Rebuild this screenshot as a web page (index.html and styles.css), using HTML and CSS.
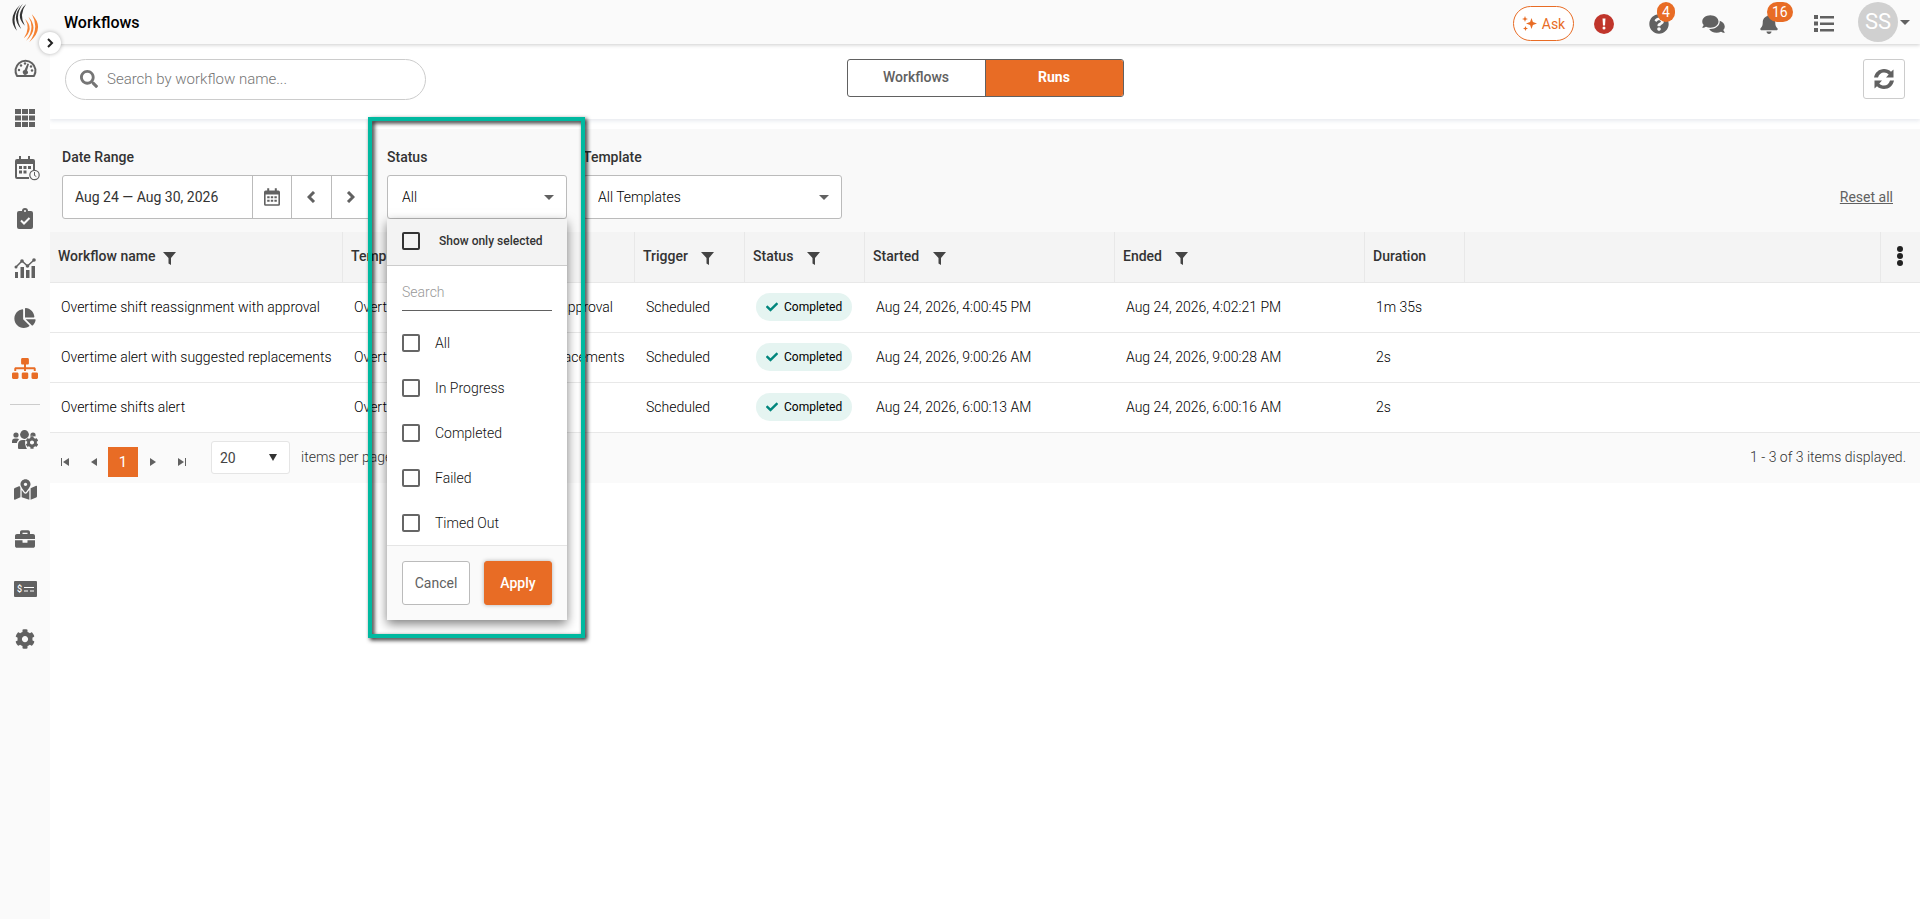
FILE: index.html
```html
<!DOCTYPE html>
<html lang="en">
<head>
  <meta charset="UTF-8">
  <title>Workflows</title>
  <link rel="stylesheet" href="styles.css">
</head>
<body>
  <!-- Shared icons -->
  <svg class="sprite" aria-hidden="true">
    <symbol id="filter" viewBox="0 0 13 13"><path d="M0 0h13L8 6v7L5.500 11.500V6z"/></symbol>
    <symbol id="caret" viewBox="0 0 10 5"><path d="M0 0h10L5 5z"/></symbol>
    <symbol id="check" viewBox="0 0 512 512"><path d="M173.900 439.400l-166.400-166.400c-10-10-10-26.200 0-36.200l36.200-36.200c10-10 26.200-10 36.200 0L192 312.700 432.100 72.600c10-10 26.200-10 36.200 0l36.200 36.200c10 10 10 26.200 0 36.200l-294.400 294.400c-10 10-26.200 10-36.200 0z"/></symbol>
    <symbol id="gear" viewBox="0 0 512 512"><path d="M487.400 315.700l-42.600-24.600c4.300-23.200 4.300-47 0-70.200l42.600-24.600c4.900-2.800 7.100-8.600 5.500-14-11.100-35.600-30-67.800-54.700-94.600-3.800-4.100-10-5.100-14.800-2.300L380.800 110c-17.900-15.400-38.500-27.300-60.800-35.100V25.800c0-5.600-3.900-10.500-9.400-11.700-36.700-8.200-74.300-7.800-109.200 0-5.500 1.200-9.400 6.100-9.400 11.700V75c-22.200 7.900-42.800 19.800-60.800 35.100L88.700 85.500c-4.900-2.800-11-1.900-14.800 2.300-24.700 26.700-43.600 58.900-54.700 94.600-1.700 5.400.6 11.200 5.500 14L67.300 221c-4.300 23.200-4.300 47 0 70.200l-42.600 24.600c-4.900 2.800-7.100 8.600-5.500 14 11.100 35.600 30 67.800 54.700 94.600 3.800 4.100 10 5.100 14.800 2.300l42.600-24.600c17.900 15.400 38.500 27.300 60.800 35.100v49.200c0 5.600 3.900 10.500 9.400 11.700 36.700 8.200 74.300 7.800 109.200 0 5.500-1.200 9.400-6.100 9.400-11.700v-49.200c22.200-7.900 42.800-19.800 60.800-35.100l42.600 24.600c4.900 2.800 11 1.900 14.800-2.300 24.700-26.700 43.600-58.900 54.700-94.600 1.500-5.500-.7-11.300-5.600-14.100zM256 336c-44.100 0-80-35.900-80-80s35.900-80 80-80 80 35.900 80 80-35.900 80-80 80z"/></symbol>
    <symbol id="calendar" viewBox="0 0 20 22"><path fill-rule="evenodd" d="M4 0h2.500v3h7V0H16v3h2a2 2 0 0 1 2 2v15a2 2 0 0 1-2 2H2a2 2 0 0 1-2-2V5a2 2 0 0 1 2-2h2zM2 8v12h16V8zM4 10h3v2.500H4zM8.500 10h3v2.500h-3zM13 10h3v2.500h-3zM4 14.500h3V17H4zM8.500 14.500h3V17h-3zM13 14.500h3V17h-3z"/></symbol>
  </svg>

  <aside class="sidebar">
    <a class="logo" href="#" aria-label="Home">
      <svg width="27" height="40" viewBox="0 0 80 120">
        <g fill="#333">
          <path d="M24 5Q-17 45 14 83Q-4 42 24 5z"/>
          <path d="M32 2Q-7 42 27 78Q5 40 32 2z"/>
          <path d="M42 3Q6 36 38 68Q19 35 42 3z"/>
        </g>
        <g fill="#f58233">
          <path d="M39 48Q68 78 35 106Q56 76 39 48z"/>
          <path d="M49 41Q82 78 42 113Q70 76 49 41z"/>
          <path d="M59 34Q100 76 51 118Q83 76 59 34z"/>
        </g>
      </svg>
    </a>
    <button class="expand" aria-label="Expand menu">
      <svg width="7" height="10" viewBox="0 0 7 10"><path d="M1 1l4 4-4 4" fill="none" stroke="#222" stroke-width="2"/></svg>
    </button>
    <nav class="menu">
      <a href="#" aria-label="Dashboard">
        <svg width="23" height="18" viewBox="0 0 23 18"><path d="M3 17a10 10 0 1 1 17 0z" fill="none" stroke="#616161" stroke-width="2" stroke-linejoin="round"/><circle cx="5" cy="11" r="1.200"/><circle cx="7" cy="6.500" r="1.200"/><circle cx="11" cy="4.500" r="1.200"/><circle cx="17" cy="7.500" r="1.200"/><circle cx="18" cy="11.500" r="1.200"/><path d="M13.500 4.500l1.500.5-2 6.500a2.500 2.500 0 1 1-2.500-.5z"/></svg>
      </a>
      <a href="#" aria-label="Schedule grid">
        <svg width="20" height="18" viewBox="0 0 20 18"><path d="M0 0h6v5H0zM7 0h6v5H7zM14 0h6v5h-6zM0 6.500h6v5H0zM7 6.500h6v5H7zM14 6.500h6v5h-6zM0 13h6v5H0zM7 13h6v5H7zM14 13h6v5h-6z"/></svg>
      </a>
      <a class="wide" href="#" aria-label="Time calendar">
        <svg width="25" height="25" viewBox="0 0 25 25"><path fill-rule="evenodd" d="M4 0h2v3h7V0h2v3h3a2 2 0 0 1 2 2v9h-2V8H2v13h12v2H2a2 2 0 0 1-2-2V5a2 2 0 0 1 2-2h2z"/><path d="M4 10h3v3H4zM8.500 10h3v3h-3zM13 10h3v3h-3zM4 14.500h3v3H4zM8.500 14.500h3v3h-3z"/><circle cx="19.500" cy="19" r="4.700" fill="#fafafa" stroke="#616161" stroke-width="1.200"/><path d="M19.500 16v3.500l1.800 1" fill="none" stroke="#616161"/></svg>
      </a>
      <a href="#" aria-label="Tasks">
        <svg width="16" height="21" viewBox="0 0 16 21"><path d="M2 3h3a3 3 0 0 1 6 0h3a2 2 0 0 1 2 2v14a2 2 0 0 1-2 2H2a2 2 0 0 1-2-2V5a2 2 0 0 1 2-2z"/><circle cx="8" cy="3" r="1" fill="#fafafa"/><path d="M4 12.500l3 3 5.500-5.500" fill="none" stroke="#fafafa" stroke-width="2"/></svg>
      </a>
      <a href="#" aria-label="Analytics">
        <svg width="22" height="20" viewBox="0 0 22 20"><path d="M1 14h3v6H1zM6.500 9h3.500v11H6.500zM12 12h3.500v8H12zM17.500 8h3.500v12h-3.500z"/><path d="M2 9l6-6 5.500 5L20 2" fill="none" stroke="#616161" stroke-width="1.500"/><circle cx="2" cy="9" r="1.500"/><circle cx="8" cy="3" r="1.800"/><circle cx="13.500" cy="8" r="1.800"/><circle cx="20" cy="2" r="1.800"/></svg>
      </a>
      <a href="#" aria-label="Reports">
        <svg width="22" height="20" viewBox="0 0 544 512"><path d="M527.800 288H290.500l158 158c6 6 16 6.500 22.200.7 38.700-36.500 65.300-85.600 73.100-140.900 1.400-9.400-6.500-17.800-16-17.800zm-15.800-64.800C503.700 103.700 408.300 8.300 288.800 0 279.700-.6 272 7.100 272 16.200V240h223.800c9.100 0 16.800-7.700 16.200-16.800zM224 288V50.700c0-9.500-8.400-17.400-17.800-16C87 51.500-4.100 155.600.1 280.400 4.500 408.500 114.800 513.600 243 512c50.400-.6 97-16.900 135.300-44 7.900-5.600 8.400-17.200 1.600-24.100L224 288z"/></svg>
      </a>
      <a class="active" href="#" aria-label="Workflows">
        <svg width="26" height="21" viewBox="0 0 640 512"><path d="M128 352H32c-17.700 0-32 14.300-32 32v96c0 17.700 14.300 32 32 32h96c17.700 0 32-14.300 32-32v-96c0-17.700-14.300-32-32-32zm-24-80h192v48h48v-48h192v48h48v-57.600c0-21.200-17.200-38.400-38.400-38.400H344v-64h40c17.700 0 32-14.300 32-32V32c0-17.700-14.300-32-32-32H256c-17.700 0-32 14.300-32 32v96c0 17.700 14.300 32 32 32h40v64H94.400C73.200 224 56 241.200 56 262.400V320h48v-48zm264 80h-96c-17.700 0-32 14.300-32 32v96c0 17.700 14.300 32 32 32h96c17.700 0 32-14.300 32-32v-96c0-17.700-14.300-32-32-32zm240 0h-96c-17.700 0-32 14.300-32 32v96c0 17.700 14.300 32 32 32h96c17.700 0 32-14.300 32-32v-96c0-17.700-14.300-32-32-32z"/></svg>
      </a>
      <hr>
      <a href="#" aria-label="Team settings">
        <svg width="26" height="19" viewBox="0 0 26 19"><circle cx="4" cy="5" r="2.600"/><circle cx="12.500" cy="4.500" r="4.400"/><circle cx="21" cy="5" r="2.600"/><path d="M0 13V11.500a3 3 0 0 1 3-3h2q1.500 0 2 1Q5 11 4.800 13zM6 18v-3q0-5 5-5h3q-2 4 1 9H7q-1 0-1-1z"/><circle cx="20" cy="12.500" r="6.700" fill="#fafafa"/><use href="#gear" x="13.500" y="6" width="13" height="13"/></svg>
      </a>
      <a href="#" aria-label="Locations">
        <svg width="23" height="21" viewBox="0 0 576 512"><path d="M288 0c-69.600 0-126 56.400-126 126 0 56.300 82.400 158.800 113.900 196 6.400 7.500 17.800 7.500 24.200 0C331.700 284.800 414 182.300 414 126 414 56.400 357.600 0 288 0zm0 168c-23.200 0-42-18.800-42-42s18.800-42 42-42 42 18.800 42 42-18.800 42-42 42zM20.100 216A32 32 0 0 0 0 245.700V496c0 11.300 11.400 19.100 21.900 14.900L160 448V214.900c-8.800-16-16.100-31.500-21.300-46.400L20.100 216zM288 359.700c-14.100 0-27.400-6.200-36.500-17-19.700-23.200-40.600-49.600-59.500-76.700v182l192 64V266c-18.900 27.100-39.800 53.500-59.500 76.700-9.100 10.800-22.400 17-36.500 17zm266.100-198.500L416 224v288l139.900-56A32 32 0 0 0 576 426.300V176c0-11.300-11.400-19-21.900-14.800z"/></svg>
      </a>
      <a href="#" aria-label="Jobs">
        <svg width="20" height="20" viewBox="0 0 512 512"><path d="M320 336c0 8.800-7.200 16-16 16h-96c-8.800 0-16-7.200-16-16v-48H0v144c0 25.600 22.400 48 48 48h416c25.600 0 48-22.400 48-48V288H320v48zm144-208h-80V80c0-25.600-22.400-48-48-48H176c-25.600 0-48 22.400-48 48v48H48c-25.600 0-48 22.400-48 48v80h512v-80c0-25.600-22.400-48-48-48zm-144 0H192V96h128v32z"/></svg>
      </a>
      <a href="#" aria-label="Payroll">
        <svg width="23" height="16" viewBox="0 0 23 16"><rect width="23" height="16" rx="1"/><text x="3" y="11" fill="#fff" font-family="Roboto, sans-serif" font-size="9" font-weight="500">$</text><path d="M10 6.500h10M10 10h4M16 10h4" stroke="#fff" stroke-width="1.200"/></svg>
      </a>
      <a href="#" aria-label="Settings">
        <svg width="20" height="20"><use href="#gear"/></svg>
      </a>
    </nav>
  </aside>

  <div class="main">
    <header class="header">
      <h1>Workflows</h1>
      <div class="header-actions">
        <button class="ask">
          <svg width="15" height="15" viewBox="0 0 15 15"><path d="M9.500 2l1.400 4.100L15 7.500l-4.100 1.400L9.500 13l-1.400-4.100L4 7.500l4.100-1.400zM3 0l.8 2.200L6 3l-2.200.8L3 6l-.8-2.200L0 3l2.200-.8zM3.500 10l.7 1.800 1.800.7-1.800.7-.7 1.800-.7-1.800-1.800-.7 1.800-.7z"/></svg>
          Ask
        </button>
        <button class="icon-btn" aria-label="Alerts">
          <svg width="20" height="20" viewBox="0 0 20 20"><circle cx="10" cy="10" r="10" fill="#c0352b"/><path d="M8.500 4.500h3L11 11.500H9z" fill="#fff"/><circle cx="10" cy="14" r="1.500" fill="#fff"/></svg>
        </button>
        <button class="icon-btn" aria-label="Help">
          <svg width="20" height="20" viewBox="0 0 512 512"><path d="M504 256c0 137-111 248-248 248S8 393 8 256C8 119.100 119 8 256 8s248 111.100 248 248zM262.700 90c-54.500 0-89.300 23-116.600 63.800-3.500 5.300-2.400 12.400 2.700 16.300l34.700 26.300c5.200 3.900 12.600 3 16.700-2.100 17.900-22.700 30.100-35.800 57.300-35.800 20.400 0 45.700 13.100 45.700 33 0 15-12.400 22.700-32.500 34C247.100 238.500 216 254.900 216 296v4c0 6.600 5.400 12 12 12h56c6.600 0 12-5.400 12-12v-1.300c0-28.500 83.200-29.600 83.200-106.700 0-58-60.200-102-116.500-102zM256 338c-25.400 0-46 20.600-46 46s20.600 46 46 46 46-20.600 46-46-20.600-46-46-46z"/></svg>
          <span class="badge">4</span>
        </button>
        <button class="icon-btn" aria-label="Messages">
          <svg width="23" height="20" viewBox="0 0 576 512"><path d="M416 192c0-88.400-93.100-160-208-160S0 103.600 0 192c0 34.300 14.100 65.900 38 92-13.400 30.200-35.500 54.200-35.800 54.500-2.200 2.300-2.800 5.700-1.500 8.700S4.800 352 8 352c36.600 0 66.900-12.300 88.700-25 32.200 15.700 70.300 25 111.300 25 114.900 0 208-71.600 208-160zm122 220c23.900-26 38-57.700 38-92 0-66.900-53.500-124.200-129.300-148.100.9 6.600 1.300 13.300 1.300 20.100 0 105.900-107.700 192-240 192-10.800 0-21.300-.8-31.700-1.900C207.800 439.600 281.800 480 368 480c41 0 79.100-9.200 111.300-25 21.800 12.700 52.100 25 88.700 25 3.200 0 6.100-1.900 7.300-4.800 1.300-2.900.7-6.300-1.500-8.700-.3-.3-22.400-24.200-35.800-54.500z"/></svg>
        </button>
        <button class="icon-btn" aria-label="Notifications">
          <svg width="18" height="20" viewBox="0 0 448 512"><path d="M224 512c35.300 0 64-28.700 64-64H160c0 35.400 28.700 64 64 64zm215.400-149.700c-19.300-20.800-55.500-52-55.500-154.300 0-77.700-54.500-139.900-127.900-155.200V32c0-17.700-14.300-32-32-32s-32 14.300-32 32v20.800C118.600 68.100 64.100 130.300 64.100 208c0 102.300-36.200 133.500-55.500 154.300-6 6.400-8.700 14.200-8.600 21.700.1 16.400 13 32 32.100 32h383.800c19.100 0 32-15.600 32.100-32 0-7.500-2.600-15.300-8.600-21.700z"/></svg>
          <span class="badge">16</span>
        </button>
        <button class="icon-btn" aria-label="List">
          <svg width="20" height="17" viewBox="0 0 20 17"><path d="M0 0h4v4H0zM6 1h14v2.500H6zM0 6.500h4v4H0zM6 7.500h14V10H6zM0 13h4v4H0zM6 14h14v2.500H6z"/></svg>
        </button>
        <button class="user" aria-label="Account">
          <span class="avatar">SS</span>
          <svg width="10" height="5"><use href="#caret"/></svg>
        </button>
      </div>
    </header>

    <div class="toolbar">
      <label class="search">
        <svg width="18" height="18" viewBox="0 0 512 512"><path d="M505 442.700L405.300 343c-4.500-4.500-10.600-7-17-7H372c27.600-35.300 44-79.700 44-128C416 93.100 322.900 0 208 0S0 93.100 0 208s93.100 208 208 208c48.300 0 92.700-16.400 128-44v16.300c0 6.400 2.500 12.500 7 17l99.700 99.700c9.400 9.400 24.600 9.400 33.900 0l28.300-28.300c9.400-9.400 9.400-24.600.1-34zM208 336c-70.700 0-128-57.200-128-128 0-70.700 57.200-128 128-128 70.700 0 128 57.200 128 128 0 70.700-57.200 128-128 128z"/></svg>
        <input type="text" placeholder="Search by workflow name..." aria-label="Search by workflow name">
      </label>
      <div class="tabs">
        <button>Workflows</button>
        <button class="selected">Runs</button>
      </div>
      <button class="refresh" aria-label="Refresh">
        <svg width="20" height="20" viewBox="0 0 20 20"><path d="M0 8.500C1 3.500 5 0 10 0c2.800 0 5.200 1 7 2.800L19.500.5V8.500H12l2.700-2.900C13.500 4.300 12 3.500 10 3.500c-3 0-5.200 2-6 5zM20 11.500c-1 5-5 8.500-10 8.500-2.800 0-5.200-1-7-2.800L.5 19.500v-8H8l-2.700 2.900c1.200 1.300 2.700 2.100 4.700 2.100 3 0 5.200-2 6-5z"/></svg>
      </button>
    </div>

    <section class="filters">
      <div class="field">
        <label for="dateRange">Date Range</label>
        <div class="date-group">
          <input type="text" id="dateRange" value="Aug 24 — Aug 30, 2026">
          <button aria-label="Pick dates"><svg width="16" height="18"><use href="#calendar"/></svg></button>
          <button aria-label="Previous"><svg width="9" height="12" viewBox="0 0 9 12"><path d="M7 1L2 6l5 5" fill="none" stroke="#616161" stroke-width="3"/></svg></button>
          <button aria-label="Next"><svg width="9" height="12" viewBox="0 0 9 12"><path d="M2 1l5 5-5 5" fill="none" stroke="#616161" stroke-width="3"/></svg></button>
        </div>
      </div>

      <div class="field status-field">
        <label for="status">Status</label>
        <div class="select">
          <select id="status"><option>All</option></select>
          <svg width="10" height="5"><use href="#caret"/></svg>
        </div>

        <form class="panel">
          <label class="only-selected"><input type="checkbox"> Show only selected</label>
          <div class="panel-search">
            <input type="text" placeholder="Search" aria-label="Search statuses" autofocus>
          </div>
          <label class="option"><input type="checkbox"> All</label>
          <label class="option"><input type="checkbox"> In Progress</label>
          <label class="option"><input type="checkbox"> Completed</label>
          <label class="option"><input type="checkbox"> Failed</label>
          <label class="option"><input type="checkbox"> Timed Out</label>
          <div class="panel-footer">
            <button type="button">Cancel</button>
            <button type="button" class="apply">Apply</button>
          </div>
        </form>
        <div class="highlight"></div>
      </div>

      <div class="field template-field">
        <label for="template">Template</label>
        <div class="select">
          <select id="template"><option>All Templates</option></select>
          <svg width="10" height="5"><use href="#caret"/></svg>
        </div>
      </div>

      <a class="reset" href="#">Reset all</a>
    </section>

    <table class="runs">
      <colgroup>
        <col class="col-name"><col class="col-name"><col class="col-trigger"><col class="col-status">
        <col class="col-date"><col class="col-date"><col class="col-duration"><col><col class="col-menu">
      </colgroup>
      <thead>
        <tr>
          <th class="tight">Workflow name <svg width="13" height="13"><use href="#filter"/></svg></th>
          <th>Template <svg width="13" height="13"><use href="#filter"/></svg></th>
          <th>Trigger <svg width="13" height="13"><use href="#filter"/></svg></th>
          <th>Status <svg width="13" height="13"><use href="#filter"/></svg></th>
          <th>Started <svg width="13" height="13"><use href="#filter"/></svg></th>
          <th>Ended <svg width="13" height="13"><use href="#filter"/></svg></th>
          <th>Duration</th>
          <th></th>
          <th class="menu-cell">
            <button aria-label="Columns"><svg width="6" height="20" viewBox="0 0 6 20"><circle cx="3" cy="3" r="3"/><circle cx="3" cy="10" r="3"/><circle cx="3" cy="17" r="3"/></svg></button>
          </th>
        </tr>
      </thead>
      <tbody>
        <tr>
          <td>Overtime shift reassignment with approval</td>
          <td>Overtime shift reassignment with approval</td>
          <td>Scheduled</td>
          <td><span class="pill"><svg width="12" height="12"><use href="#check"/></svg>Completed</span></td>
          <td>Aug 24, 2026, 4:00:45 PM</td>
          <td>Aug 24, 2026, 4:02:21 PM</td>
          <td>1m 35s</td>
          <td colspan="2"></td>
        </tr>
        <tr>
          <td>Overtime alert with suggested replacements</td>
          <td>Overtime alert with suggested replacements</td>
          <td>Scheduled</td>
          <td><span class="pill"><svg width="12" height="12"><use href="#check"/></svg>Completed</span></td>
          <td>Aug 24, 2026, 9:00:26 AM</td>
          <td>Aug 24, 2026, 9:00:28 AM</td>
          <td>2s</td>
          <td colspan="2"></td>
        </tr>
        <tr>
          <td>Overtime shifts alert</td>
          <td>Overtime shifts alert</td>
          <td>Scheduled</td>
          <td><span class="pill"><svg width="12" height="12"><use href="#check"/></svg>Completed</span></td>
          <td>Aug 24, 2026, 6:00:13 AM</td>
          <td>Aug 24, 2026, 6:00:16 AM</td>
          <td>2s</td>
          <td colspan="2"></td>
        </tr>
      </tbody>
    </table>

    <footer class="pager">
      <div class="pages">
        <button aria-label="First page"><svg width="8" height="8" viewBox="0 0 8 8"><path d="M0 0h1v8H0zM8 0v8L2 4z"/></svg></button>
        <button aria-label="Previous page"><svg width="6" height="8" viewBox="0 0 6 8"><path d="M6 0v8L0 4z"/></svg></button>
        <button class="current">1</button>
        <button aria-label="Next page"><svg width="6" height="8" viewBox="0 0 6 8"><path d="M0 0v8l6-4z"/></svg></button>
        <button aria-label="Last page"><svg width="8" height="8" viewBox="0 0 8 8"><path d="M7 0h1v8H7zM0 0v8l6-4z"/></svg></button>
      </div>
      <div class="select page-size">
        <select id="pageSize"><option>20</option></select>
        <svg width="8" height="7" viewBox="0 0 8 7"><path d="M0 0h8L4 7z"/></svg>
      </div>
      <label for="pageSize">items per page</label>
      <span class="count">1 - 3 of 3 items displayed.</span>
    </footer>
  </div>
</body>
</html>
```
FILE: styles.css
```css
* {
  box-sizing: border-box;
}

body {
  margin: 0;
  min-height: 100vh;
  display: flex;
  font-family: Roboto, sans-serif;
  font-size: 14px;
  font-weight: 300;
  color: #000;
  background-color: #fff;
}

button, input, select {
  font-family: inherit;
  font-size: 14px;
  margin: 0;
}

button {
  padding: 0;
  border: none;
  background: none;
  color: #616161;
  cursor: pointer;
  display: flex;
  align-items: center;
  justify-content: center;
}

svg {
  fill: #616161;
  flex: none;
}

.sprite {
  position: absolute;
  width: 0;
  height: 0;
}

/* Sidebar */
.sidebar {
  position: relative;
  z-index: 3;
  width: 50px;
  flex: none;
  background-color: #fafafa;
}

.logo {
  display: block;
  height: 43px;
  padding: 3px 0 0 12px;
}

.expand {
  position: absolute;
  top: 32px;
  left: 39px;
  width: 22px;
  height: 22px;
  border-radius: 50%;
  background-color: #fff;
  box-shadow: 0 0 4px rgba(0, 0, 0, 0.3);
}

.menu {
  display: flex;
  flex-direction: column;
}

.menu a {
  height: 50px;
  display: flex;
  align-items: center;
  justify-content: center;
}

.menu .wide {
  padding-left: 4px;
}

.menu .active svg {
  fill: #e86c25;
}

.menu hr {
  width: 30px;
  margin: 11px auto 9px;
  border: none;
  border-top: 1px solid #ccc;
}

/* Header */
.main {
  flex: 1;
  min-width: 0;
}

.header {
  position: relative;
  z-index: 2;
  height: 44px;
  padding: 0 10px 0 14px;
  display: flex;
  align-items: center;
  justify-content: space-between;
  background-color: #fafafa;
  box-shadow: 0 1px 4px rgba(0, 0, 0, 0.2);
}

h1 {
  margin: 0;
  font-size: 16px;
  font-weight: 500;
  color: #000;
}

.header-actions {
  display: flex;
  align-items: center;
}

.ask {
  width: 61px;
  height: 35px;
  margin: 3px 2px 0 0;
  gap: 5px;
  border: 1px solid #e86c25;
  border-radius: 18px;
  background-color: #fff;
  color: #e86c25;
}

.ask svg {
  fill: #e86c25;
}

.icon-btn {
  position: relative;
  width: 55px;
  height: 44px;
  padding-top: 3px;
}

.badge {
  position: absolute;
  top: 2px;
  left: 26px;
  min-width: 18px;
  padding: 0 5px;
  border-radius: 10px;
  background-color: #e86c25;
  color: #fff;
  font-size: 14px;
  line-height: 20px;
}

.user {
  gap: 2px;
  margin-left: 7px;
}

.avatar {
  width: 40px;
  height: 40px;
  border-radius: 50%;
  background-color: #d0d0d0;
  color: #fff;
  font-size: 22px;
  line-height: 40px;
}

/* Toolbar */
.toolbar {
  display: grid;
  grid-template-columns: 1fr auto 1fr;
  align-items: start;
  padding: 15px 15px 19px;
  margin-bottom: 10px;
  box-shadow: 0 2px 4px rgba(60, 80, 120, 0.12);
}

.search {
  width: 361px;
  height: 41px;
  padding: 0 14px 2px;
  display: flex;
  align-items: center;
  gap: 9px;
  border: 1px solid #ccc;
  border-radius: 21px;
}

.search svg {
  fill: #757575;
}

.search input {
  flex: 1;
  padding: 0;
  border: none;
  outline: none;
  font-size: 15px;
  font-weight: 300;
}

.search input::placeholder {
  color: #757575;
}

.tabs {
  display: flex;
  width: 277px;
  border: 1px solid #616161;
  border-radius: 3px;
  overflow: hidden;
}

.tabs button {
  flex: 1;
  height: 36px;
  padding-bottom: 2px;
  font-weight: 500;
}

.tabs .selected {
  background-color: #e86c25;
  color: #fff;
  font-weight: 700;
  border-left: 1px solid #616161;
}

.refresh {
  justify-self: end;
  width: 42px;
  height: 40px;
  border: 1px solid #ccc;
  border-radius: 3px;
}

/* Filters */
.filters {
  display: flex;
  align-items: flex-end;
  gap: 16px;
  padding: 20px 27px 13px 12px;
  background-color: #f9f9f9;
}

.field {
  display: flex;
  flex-direction: column;
  gap: 10px;
}

.field > label {
  font-weight: 500;
  line-height: 16px;
  color: #333;
}

.date-group {
  width: 309px;
  height: 44px;
  display: flex;
  background-color: #fff;
  border: 1px solid #bbb;
  border-radius: 3px;
}

.date-group input {
  width: 189px;
  padding: 0 12px;
  border: none;
  background: none;
  color: #333;
}

.date-group button {
  flex: 1;
  border-left: 1px solid #bbb;
}

.select {
  display: grid;
  align-items: center;
}

.select select {
  grid-area: 1 / 1;
  width: 100%;
  height: 44px;
  padding: 0 14px;
  border: 1px solid #bbb;
  border-radius: 3px;
  appearance: none;
  background-color: #fff;
  color: #000;
  font-weight: 300;
}

.select svg {
  grid-area: 1 / 1;
  justify-self: end;
  margin-right: 13px;
  pointer-events: none;
}

.status-field {
  position: relative;
  width: 180px;
}

.template-field {
  width: 259px;
}

.reset {
  margin-left: auto;
  line-height: 44px;
  font-weight: 400;
  color: #616161;
}

/* Status dropdown */
.panel {
  position: absolute;
  z-index: 4;
  top: 100%;
  left: 0;
  width: 180px;
  background-color: #fff;
  box-shadow: 0 4px 10px rgba(0, 0, 0, 0.5);
}

.panel label {
  display: flex;
  align-items: center;
  height: 45px;
  padding: 0 15px;
  gap: 15px;
  color: #111;
}

.panel .only-selected {
  height: 47px;
  padding-bottom: 2px;
  gap: 19px;
  background-color: #f3f3f3;
  border-bottom: 1px solid #ccc;
  font-size: 12px;
  font-weight: 500;
  white-space: nowrap;
  color: #333;
}

.panel input[type="checkbox"] {
  width: 18px;
  height: 18px;
  flex: none;
  appearance: none;
  border: 2px solid #666;
  border-radius: 2px;
  background-color: #fff;
}

.panel .only-selected input {
  border-color: #333;
  background: none;
}

.panel-search {
  padding: 10px 15px 9px;
}

.panel-search input {
  width: 100%;
  height: 35px;
  padding: 0 0 2px;
  border: none;
  border-bottom: 1px solid #616161;
  outline: none;
  font-weight: 300;
}

.panel-search input::placeholder {
  color: #999;
}

.panel-footer {
  display: flex;
  gap: 14px;
  padding: 15px;
  background-color: #fafafa;
  border-top: 1px solid #e5e5e5;
}

.panel-footer button {
  flex: 1;
  height: 44px;
  border: 1px solid #bbb;
  border-radius: 3px;
  background-color: #fff;
}

.panel-footer .apply {
  border-color: #e86c25;
  background-color: #e86c25;
  color: #fff;
  font-weight: 500;
  box-shadow: 0 0 4px rgba(0, 0, 0, 0.3);
}

.highlight {
  position: absolute;
  z-index: 5;
  top: -32px;
  left: -19px;
  width: 217px;
  height: 521px;
  border: 4px solid #00b9a0;
  filter: drop-shadow(2px 2px 2px rgba(0, 0, 0, 0.9));
  pointer-events: none;
}

/* Runs table */
.runs {
  width: 100%;
  table-layout: fixed;
  border-collapse: separate;
  border-spacing: 0;
}

.col-name { width: 292px; }
.col-trigger { width: 110px; }
.col-status { width: 120px; }
.col-date { width: 250px; }
.col-duration { width: 100px; }
.col-menu { width: 40px; }

th {
  height: 51px;
  padding: 0 8px 2px;
  background-color: #f4f4f4;
  border-bottom: 1px solid #e8e8e8;
  text-align: left;
  font-weight: 500;
  color: #333;
}

th + th {
  border-left: 1px solid #e8e8e8;
}

th svg {
  margin-left: 10px;
  vertical-align: -4px;
  fill: #444;
}

.tight svg {
  margin-left: 4px;
}

.menu-cell {
  padding: 0 2px 2px 0;
}

.menu-cell button {
  width: 100%;
}

.menu-cell svg {
  margin: 0;
  fill: #222;
}

td {
  height: 50px;
  padding: 0 11px 2px;
  border-bottom: 1px solid #e8e8e8;
  white-space: nowrap;
}

td + td {
  padding-left: 12px;
}

.pill {
  display: inline-flex;
  align-items: center;
  gap: 6px;
  height: 28px;
  padding: 0 10px;
  border-radius: 14px;
  background-color: #e5f4f1;
  color: #000;
  font-size: 12px;
  font-weight: 400;
}

.pill svg {
  fill: #00857c;
}

/* Pager */
.pager {
  display: flex;
  align-items: flex-start;
  padding: 8px 14px 6px 0;
  background-color: #fafafa;
  line-height: 33px;
  color: #333;
}

.pages {
  display: flex;
  margin: 6px 15px 0 0;
}

.pages button {
  width: 29px;
  height: 30px;
}

.pages .current {
  width: 30px;
  background-color: #e86c25;
  color: #fff;
  font-size: 15px;
}

.page-size {
  width: 79px;
  margin-right: 11px;
}

.page-size select {
  height: 33px;
  padding: 0 8px;
  border-color: #e5e5e5;
  font-weight: 400;
  color: #444;
}

.page-size svg {
  fill: #333;
}

.count {
  margin-left: auto;
}
```
